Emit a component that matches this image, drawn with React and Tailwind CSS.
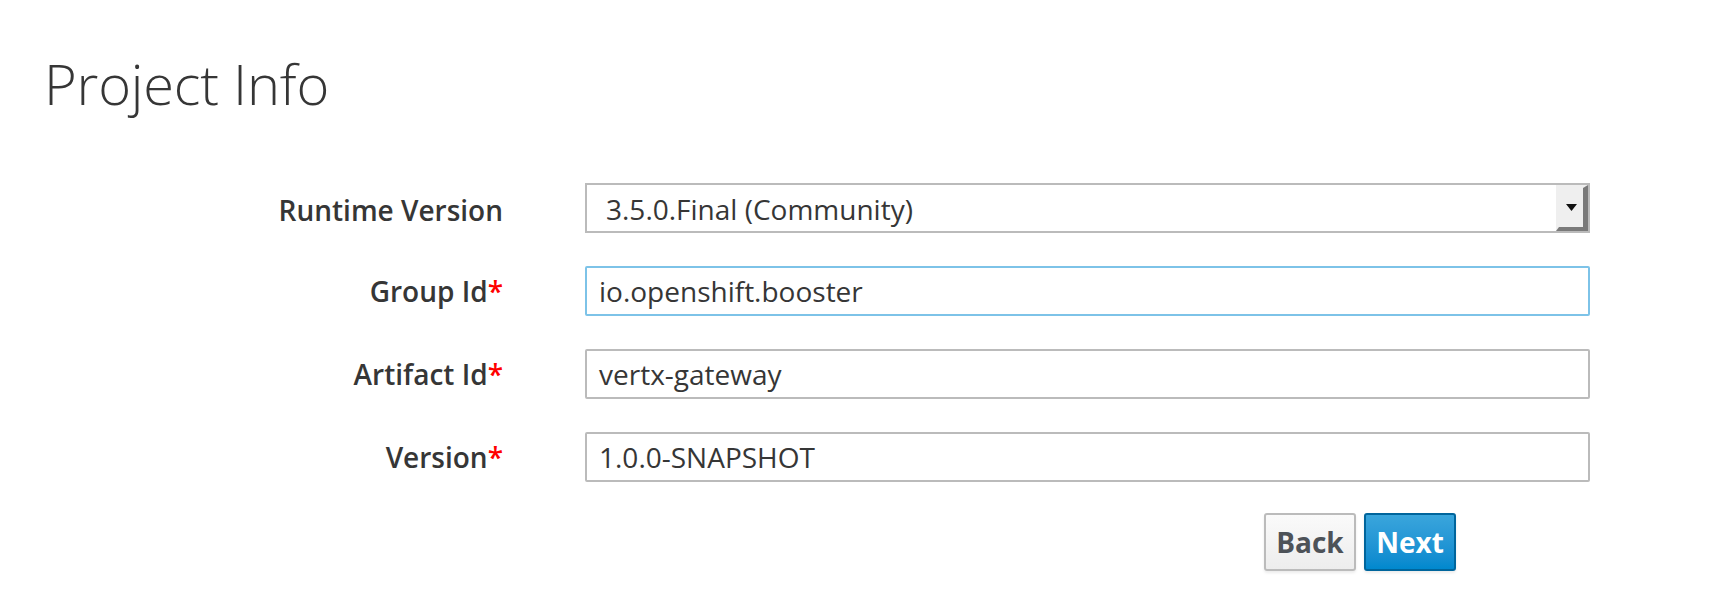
export default function App() {
  const font = { fontFamily: '"Open Sans", "Noto Sans", sans-serif' };
  return (
    <div className="w-[1726px] h-[608px] bg-white text-[#363636] overflow-hidden" style={font}>
      <h1 className="pl-[44px] pt-[55px] text-[56px] font-light leading-none tracking-[-0.2px] text-[#363636]">Project Info</h1>
      <form className="mt-[72px] flex flex-col gap-[33px]">
        <div className="flex items-center h-[50px]">
          <label className="w-[503px] text-right text-[28px] font-semibold pt-[4px]">Runtime Version</label>
          <div className="ml-[82px] w-[1005px] h-[50px] border-2 border-[#bbbbbb] bg-white flex items-center">
            <span className="flex-1 pl-[19px] text-[28px] text-[#363636] pt-[2px]">3.5.0.Final (Community)</span>
            <div className="h-full w-[32px] bg-[#efefef] border-t-[3px] border-l-[3px] border-r-[5px] border-b-[4px] border-t-[#efefef] border-l-[#efefef] border-r-[#7a7a7a] border-b-[#7a7a7a] flex items-center justify-center">
              <svg width="11" height="7" viewBox="0 0 11 7"><path d="M0 0 H11 L5.5 7 Z" fill="#111" /></svg>
            </div>
          </div>
        </div>
        <div className="flex items-center h-[50px]">
          <label className="w-[503px] text-right text-[28px] font-semibold">Group Id<span className="text-[#ff0000]">*</span></label>
          <div className="ml-[82px] w-[1005px] h-[50px] border-2 border-[#7dc3e8] rounded-[2px] bg-white flex items-center pl-[12px] text-[28px]">io.openshift.booster</div>
        </div>
        <div className="flex items-center h-[50px]">
          <label className="w-[503px] text-right text-[28px] font-semibold">Artifact Id<span className="text-[#ff0000]">*</span></label>
          <div className="ml-[82px] w-[1005px] h-[50px] border-2 border-[#bbbbbb] rounded-[2px] bg-white flex items-center pl-[12px] text-[28px]">vertx-gateway</div>
        </div>
        <div className="flex items-center h-[50px]">
          <label className="w-[503px] text-right text-[28px] font-semibold">Version<span className="text-[#ff0000]">*</span></label>
          <div className="ml-[82px] w-[1005px] h-[50px] border-2 border-[#bbbbbb] rounded-[2px] bg-white flex items-center pl-[12px] text-[28px]">1.0.0-SNAPSHOT</div>
        </div>
        <div className="flex gap-[8px] ml-[1264px] -mt-[2px]">
          <button type="button" className="w-[92px] h-[58px] rounded-[3px] border-2 border-[#bbbbbb] bg-gradient-to-b from-[#fafafa] to-[#ededed] text-[28px] font-bold text-[#4d5258] shadow-[0_2px_3px_rgba(0,0,0,0.08)]">Back</button>
          <button type="button" className="w-[92px] h-[58px] rounded-[3px] border-2 border-[#00659c] bg-gradient-to-b from-[#39a5dc] to-[#0088ce] text-[28px] font-bold text-white shadow-[0_2px_3px_rgba(0,0,0,0.08)]">Next</button>
        </div>
      </form>
    </div>
  );
}
